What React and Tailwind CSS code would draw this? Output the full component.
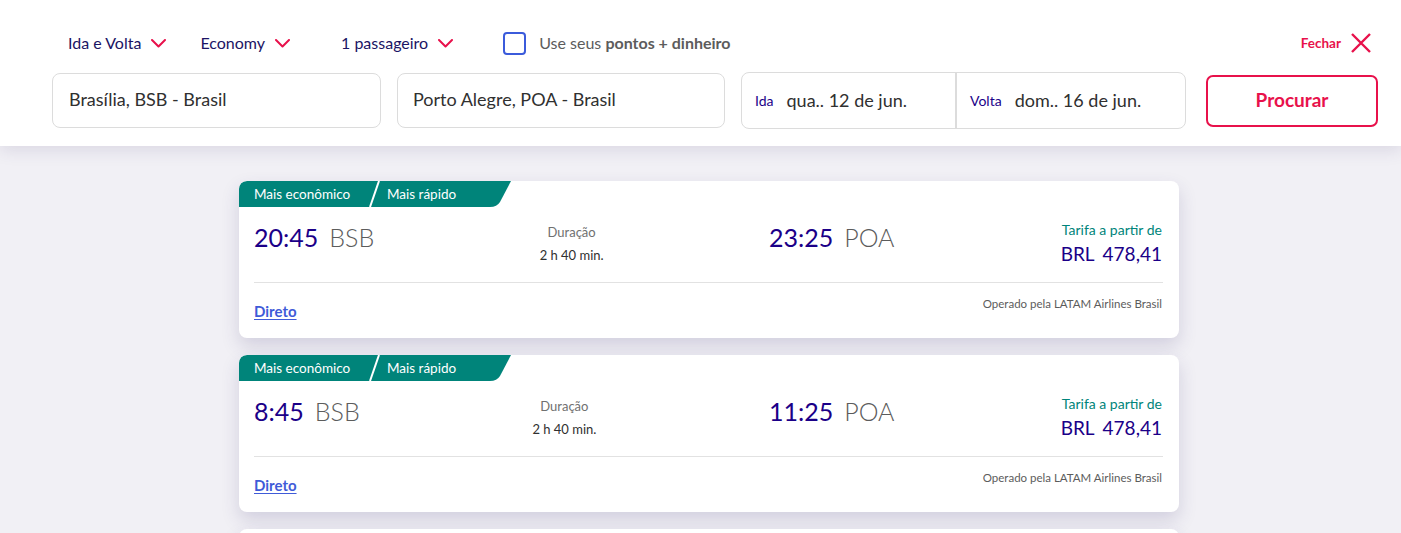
import { useState } from "react";

const flights = [
  { dep: "20:45", arr: "23:25" },
  { dep: "8:45", arr: "11:25" },
];

function Chevron() {
  return (
    <svg width="15" height="9" viewBox="0 0 15 9" fill="none" className="ml-[10px]">
      <path d="M1 1l6.5 6.5L14 1" stroke="#e8114b" strokeWidth="2" strokeLinecap="round" strokeLinejoin="round" />
    </svg>
  );
}

function Select({ label, className }) {
  return (
    <button className={`flex items-center text-[16px] text-[#1b1464] ${className}`}>
      {label}
      <Chevron />
    </button>
  );
}

function Badge() {
  return (
    <div className="relative h-[26px] w-[272px] text-[13.5px] text-white">
      <svg width="272" height="26" viewBox="0 0 272 26" className="absolute inset-0">
        <path d="M8 0H272L261 21Q258 26 251 26H0V8Q0 0 8 0Z" fill="#00847a" />
        <path d="M140 0L131 26" stroke="#fff" strokeWidth="2" />
      </svg>
      <div className="relative flex h-full items-center">
        <span className="pl-[15px] w-[148px]">Mais econômico</span>
        <span>Mais rápido</span>
      </div>
    </div>
  );
}

function FlightCard({ dep, arr }) {
  return (
    <div className="bg-white rounded-lg shadow-[0_8px_18px_rgba(60,50,110,0.17)] overflow-hidden shrink-0">
      <Badge />
      <div className="px-[15px]">
        <div className="flex items-start h-[75px]">
          <div className="flex items-start w-[515px]">
            <div className="flex text-[25px] leading-none mt-[18px]">
              <span className="text-[#1b0088]">{dep}</span>
              <span className="text-[#5c5c5c] font-light ml-[11px]">BSB</span>
            </div>
            <div className="flex-1 text-center text-[13px] leading-[23px] mt-[14px]">
              <div className="text-[#707070]">Duração</div>
              <div className="text-[#303030]">2 h 40 min.</div>
            </div>
          </div>
          <div className="flex-1 flex items-start justify-between">
            <div className="flex text-[25px] leading-none mt-[18px]">
              <span className="text-[#1b0088]">{arr}</span>
              <span className="text-[#5c5c5c] font-light ml-[11px]">POA</span>
            </div>
            <div className="text-right mt-[13px] mr-[2px]">
              <div className="text-[14px] text-[#00847a] leading-[20px]">Tarifa a partir de</div>
              <div className="text-[19px] text-[#1b0088] leading-[28px]">
                BRL<span className="ml-[8px]">478,41</span>
              </div>
            </div>
          </div>
        </div>
        <div className="border-t border-[#e2e2e2] mr-[1px]" />
        <div className="flex items-start justify-between h-[55px]">
          <a className="text-[15px] leading-[20px] font-bold text-[#3f5bd8] underline underline-offset-2 mt-[18px]">
            Direto
          </a>
          <span className="text-[11.5px] leading-[16px] text-[#5c5c5c] mt-[13px] mr-[2px]">
            Operado pela LATAM Airlines Brasil
          </span>
        </div>
      </div>
    </div>
  );
}

export default function App() {
  const [checked, setChecked] = useState(false);
  return (
    <div className="bg-[#f1f0f5] font-['Lato',sans-serif] overflow-hidden h-[533px]">
      <header className="relative z-10 bg-white h-[146px] shadow-[0_4px_16px_rgba(60,50,110,0.13)] pl-[52px] pr-[23px]">
        <div className="flex items-center h-[88px] pb-[2px] -mb-[16px]">
          <Select label="Ida e Volta" className="ml-[16px]" />
          <Select label="Economy" className="ml-[34px]" />
          <Select label="1 passageiro" className="ml-[51px]" />
          <label className="flex items-center ml-[50px] text-[16px] text-[#5c5c5c] cursor-pointer">
            <button
              onClick={() => setChecked(!checked)}
              className="w-[23px] h-[23px] rounded-[4px] border-2 border-[#3b5bdb] mr-[13px]"
            />
            Use seus&nbsp;<b className="font-bold">pontos + dinheiro</b>
          </label>
          <button className="ml-auto mr-[6px] flex items-center text-[13.5px] font-bold text-[#e8114b]">
            Fechar
            <svg width="22" height="22" viewBox="0 0 22 22" className="ml-[9px]">
              <path d="M2 2L20 20M20 2L2 20" stroke="#e8114b" strokeWidth="2.4" />
            </svg>
          </button>
        </div>
        <div className="flex items-center">
          <div className="shrink-0 w-[329px] h-[55px] rounded-lg border border-[#dcdcdc] flex items-center px-[16px] pb-[3px] text-[18px] text-[#303030]">
            Brasília, BSB - Brasil
          </div>
          <div className="shrink-0 w-[328px] h-[55px] ml-[16px] rounded-lg border border-[#dcdcdc] flex items-center px-[15px] pb-[3px] text-[18px] text-[#303030]">
            Porto Alegre, POA - Brasil
          </div>
          <div className="shrink-0 w-[445px] h-[57px] ml-[16px] rounded-lg border border-[#dcdcdc] flex">
            <div className="w-[215px] flex items-center px-[13px] pb-[1px] border-r-2 border-[#dcdcdc]">
              <span className="text-[14px] text-[#1b0088] mr-[13px]">Ida</span>
              <span className="text-[18px] text-[#303030]">qua.. 12 de jun.</span>
            </div>
            <div className="flex-1 flex items-center px-[13px] pb-[1px]">
              <span className="text-[14px] text-[#1b0088] mr-[13px]">Volta</span>
              <span className="text-[18px] text-[#303030]">dom.. 16 de jun.</span>
            </div>
          </div>
          <button className="shrink-0 ml-[20px] w-[172px] h-[52px] rounded-[7px] border-2 border-[#e8114b] text-[19px] font-bold text-[#e8114b]">
            Procurar
          </button>
        </div>
      </header>
      <main className="w-[940px] ml-[239px] pt-[35px] flex flex-col gap-[17px]">
        {flights.map((f, i) => (
          <FlightCard key={i} dep={f.dep} arr={f.arr} />
        ))}
        <div className="bg-white rounded-lg shadow-[0_8px_18px_rgba(60,50,110,0.17)] h-[157px] shrink-0" />
      </main>
    </div>
  );
}
